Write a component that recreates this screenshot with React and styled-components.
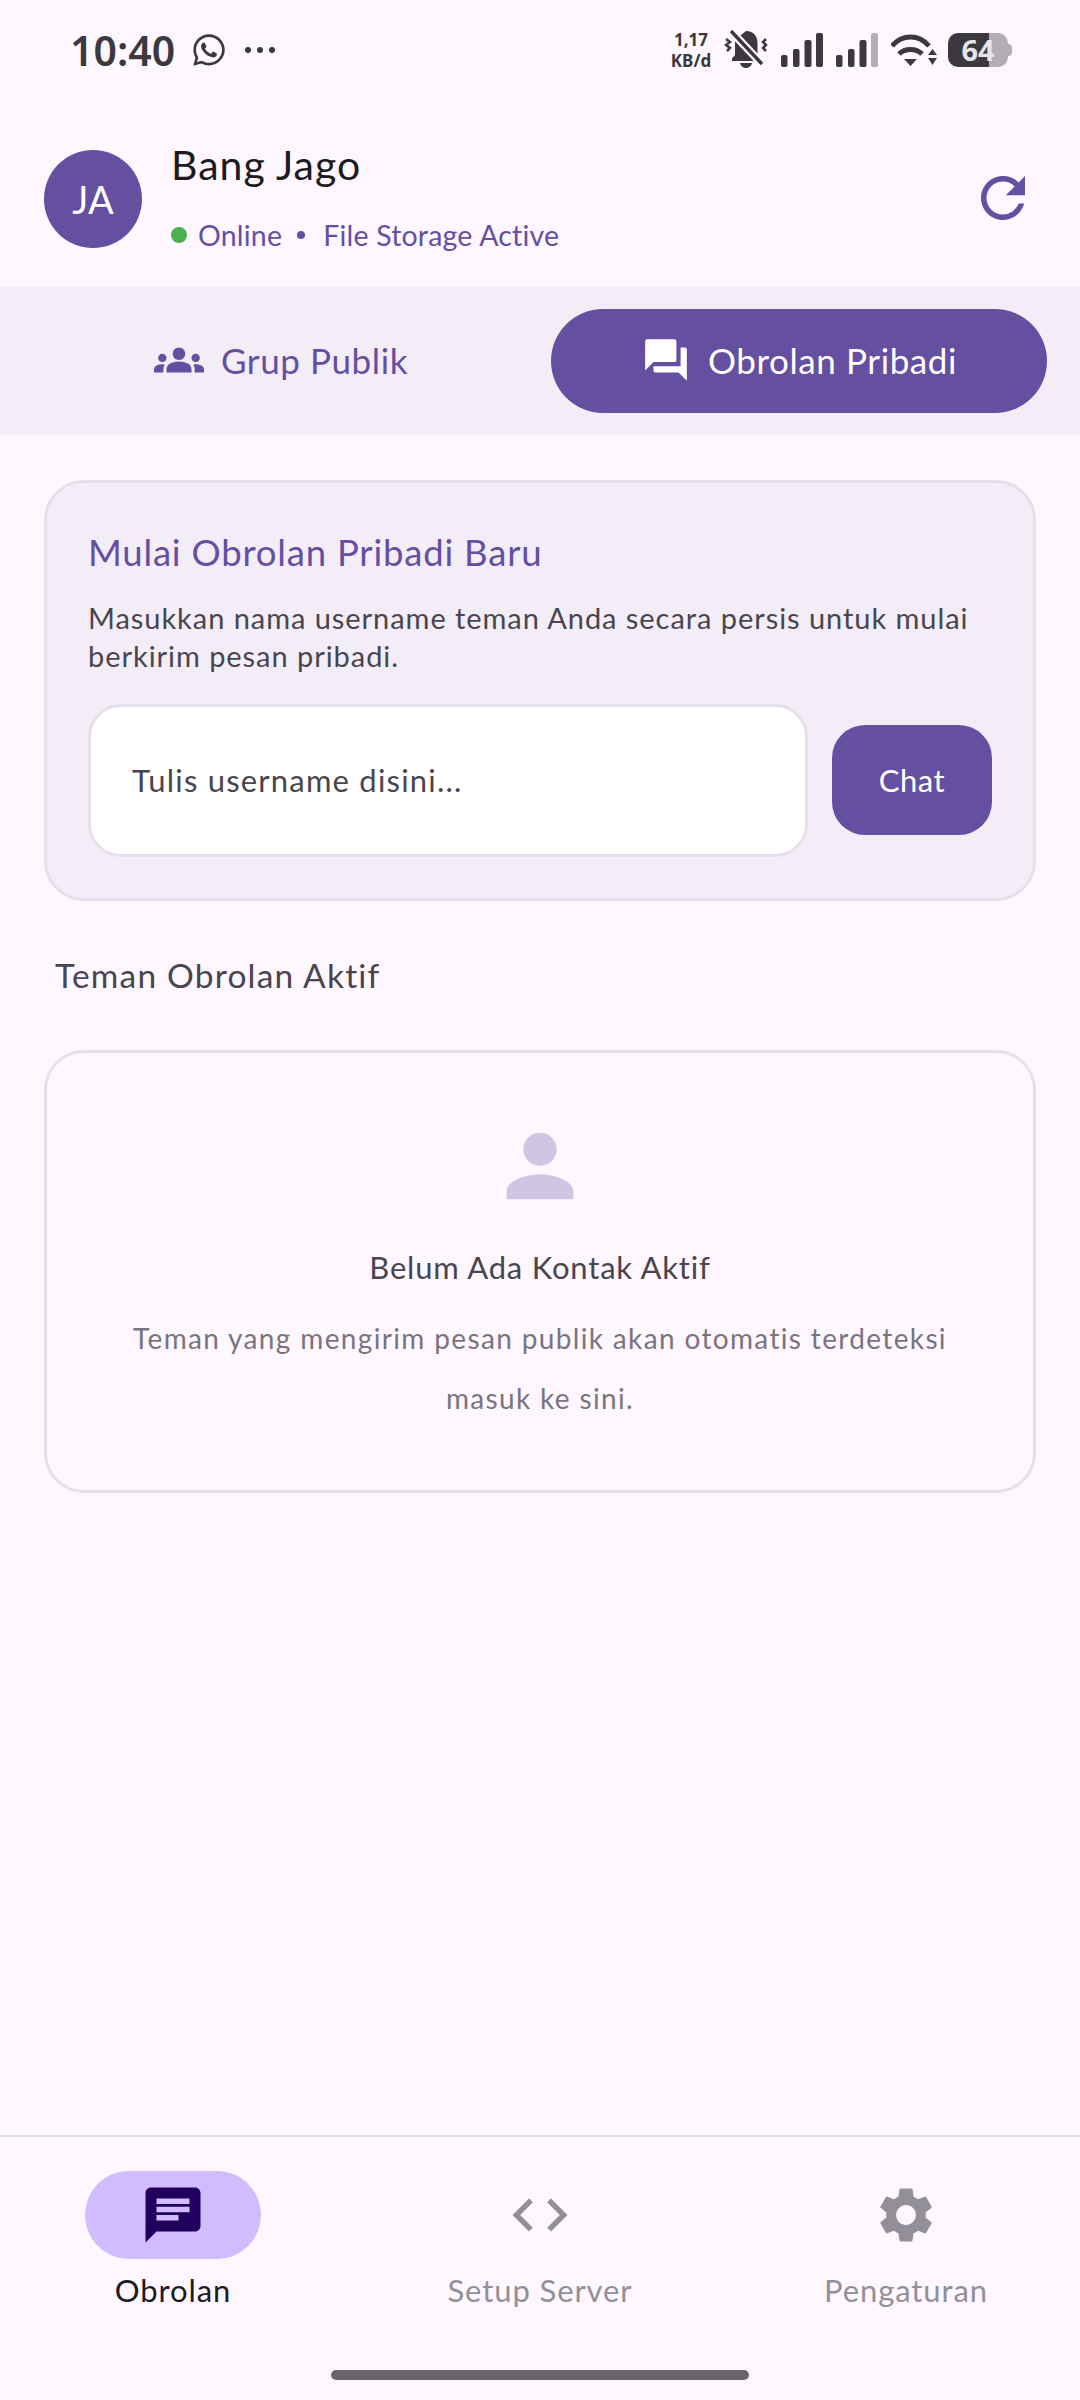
import React from 'react';
import styled, { createGlobalStyle } from 'styled-components';
import { FaWhatsapp } from 'react-icons/fa';
import { MdChat, MdCode, MdForum, MdGroups, MdPerson, MdRefresh, MdSettings } from 'react-icons/md';

const FONT = 'Lato, "Noto Sans", "Liberation Sans", sans-serif';

const GlobalStyle = createGlobalStyle`
  html, body {
    margin: 0;
    padding: 0;
    background: #fef7ff;
  }
  * { box-sizing: border-box; }
`;

const Screen = styled.div`
  width: 1080px;
  height: 2400px;
  display: flex;
  flex-direction: column;
  background: #fef7ff;
  font-family: ${FONT};
  overflow: hidden;
`;

/* status bar */
const StatusBar = styled.div`
  height: 100px;
  padding: 0 72px 0 70px;
  display: flex;
  align-items: center;
  justify-content: space-between;
  color: #3b383e;
  font-family: "Noto Sans", sans-serif;
`;

const StatusLeft = styled.div`
  display: flex;
  align-items: center;
`;

const Time = styled.span`
  font-size: 41px;
  font-weight: 600;
  line-height: 1;
`;

const WhatsappIcon = styled(FaWhatsapp)`
  margin-left: 16px;
`;

const Dots = styled.div`
  display: flex;
  gap: 6px;
  margin-left: 18px;
  span {
    width: 6px;
    height: 6px;
    border-radius: 50%;
    background: #3b383e;
  }
`;

const StatusRight = styled.div`
  display: flex;
  align-items: center;
  height: 40px;
  gap: 13px;
`;

const NetSpeed = styled.div`
  width: 46px;
  margin-right: -3px;
  text-align: center;
  font-size: 17px;
  font-weight: 700;
  line-height: 21px;
  letter-spacing: 0;
`;

const Battery = styled.div`
  position: relative;
  width: 60px;
  height: 34px;
  margin-left: -2px;
  border-radius: 10px;
  background: linear-gradient(90deg, #3b383e 68%, #b3aeb4 68%);
  color: #e8e5e9;
  font-size: 29px;
  font-weight: 700;
  line-height: 34px;
  text-align: center;
  &::after {
    content: '';
    position: absolute;
    right: -4px;
    top: 11px;
    width: 4px;
    height: 12px;
    border-radius: 0 4px 4px 0;
    background: #b3aeb4;
  }
`;

const BellOff = () => (
  <svg width="44" height="40" viewBox="0 0 44 40" fill="#3b383e">
    <path d="M22 1c4 0 7 1.500 9 4 2 2.500 2.500 6 2.500 9v11l3 3.500V31H8v-2.500l3-3.500V14c0-2 .3-3.500 1-5z" />
    <path d="M16 33h12c-.6 2.800-3 5-6 5s-5.400-2.200-6-5z" />
    <path d="M6 0l31 33" stroke="#fef7ff" strokeWidth="8" />
    <path d="M7 1l31 33" stroke="#3b383e" strokeWidth="3.500" fill="none" />
    <path d="M2 9l4 3-4 3 4 3-3 3M42 9l-3 3 3 3-3 3 3 3" stroke="#3b383e" strokeWidth="2.500" fill="none" />
  </svg>
);

const Signal = ({ dim }) => (
  <svg width="42" height="34" viewBox="0 0 42 34" fill="#3b383e">
    <rect x="0" y="22" width="6.500" height="12" rx="2" />
    <rect x="12" y="16" width="6.500" height="18" rx="2" />
    <rect x="23.500" y="7" width="7" height="27" rx="2" />
    <rect x="35" y="0" width="7" height="34" rx="2" fill={dim ? '#b3aeb4' : '#3b383e'} />
  </svg>
);

const Wifi = () => (
  <svg width="46" height="34" viewBox="0 0 46 34" fill="none" stroke="#3b383e">
    <path d="M1 13C11 1 28 1 38 13" strokeWidth="5" />
    <path d="M8 21c6-6 17-6 23 0" strokeWidth="5" />
    <path d="M13 26h13l-6.500 7z" fill="#3b383e" stroke="none" />
    <path d="M37 22h9l-4.500-6zM37 25h9l-4.500 7z" fill="#3b383e" stroke="none" />
  </svg>
);

/* header */
const Header = styled.header`
  height: 187px;
  padding: 0 44px;
  display: flex;
  align-items: center;
`;

const Avatar = styled.div`
  width: 98px;
  height: 98px;
  flex: none;
  margin-top: 10px;
  border-radius: 50%;
  background: #654fa0;
  color: #fff;
  font-size: 38px;
  display: flex;
  align-items: center;
  justify-content: center;
`;

const Identity = styled.div`
  flex: 1;
  margin: 6px 0 0 29px;
  display: flex;
  flex-direction: column;
  gap: 27px;
`;

const UserName = styled.div`
  font-size: 41px;
  line-height: 50px;
  letter-spacing: 1px;
  color: #1d1b20;
`;

const StatusLine = styled.div`
  display: flex;
  align-items: center;
  font-size: 28.500px;
  line-height: 36px;
  letter-spacing: 0.2px;
  color: #654fa0;
`;

const OnlineDot = styled.span`
  width: 16px;
  height: 16px;
  border-radius: 50%;
  background: #4caf50;
  margin-right: 11px;
`;

const Bullet = styled.span`
  width: 8px;
  height: 8px;
  border-radius: 50%;
  background: #654fa0;
  margin: 0 18px 0 15px;
`;

const RefreshIcon = styled(MdRefresh)`
  color: #654fa0;
  margin-top: 9px;
`;

/* tabs */
const TabBar = styled.div`
  height: 148px;
  padding: 22px 33px 22px 33px;
  background: #f3edf7;
  display: grid;
  grid-template-columns: 1fr 1fr;
  gap: 22px;
`;

const Tab = styled.div`
  border-radius: 52px;
  padding-bottom: 2px;
  display: flex;
  align-items: center;
  justify-content: center;
  gap: 17px;
  font-size: 35px;
  letter-spacing: 0.6px;
  background: ${(p) => (p.$active ? '#654fa0' : 'transparent')};
  color: ${(p) => (p.$active ? '#fff' : '#654fa0')};
`;

/* body */
const Content = styled.main`
  flex: 1;
  padding: 45px 44px 0;
  display: flex;
  flex-direction: column;
`;

const NewChatCard = styled.section`
  height: 421px;
  padding: 46px 41px 0;
  border: 3px solid #e7e0ec;
  border-radius: 40px;
  background: #f3edf7;
`;

const CardTitle = styled.h2`
  margin: 0;
  font-size: 36.500px;
  font-weight: 400;
  line-height: 46px;
  letter-spacing: 0.8px;
  color: #654fa0;
`;

const CardText = styled.p`
  margin: 23.500px 0 0;
  font-size: 29px;
  line-height: 38px;
  letter-spacing: 0.95px;
  color: #49454f;
`;

const InputRow = styled.div`
  margin-top: 29px;
  display: flex;
  align-items: center;
  gap: 24px;
`;

const UsernameField = styled.div`
  flex: 1;
  height: 153px;
  padding: 0 41px;
  border: 3px solid #e7e0ec;
  border-radius: 33px;
  background: #fff;
  display: flex;
  align-items: center;
  font-size: 31px;
  letter-spacing: 1.2px;
  color: #49454f;
`;

const ChatButton = styled.div`
  width: 160px;
  height: 110px;
  border-radius: 33px;
  background: #654fa0;
  color: #fff;
  display: flex;
  align-items: center;
  justify-content: center;
  font-size: 31px;
  letter-spacing: 0.5px;
`;

const SectionTitle = styled.h3`
  margin: 52px 0 0 11px;
  font-size: 33.500px;
  font-weight: 400;
  line-height: 44px;
  letter-spacing: 1.2px;
  color: #49454f;
`;

const EmptyCard = styled.section`
  margin-top: 53px;
  height: 443px;
  border: 3px solid #e7e0ec;
  border-radius: 40px;
  display: flex;
  flex-direction: column;
  align-items: center;
  padding: 63px 80px 0;
  text-align: center;
`;

const EmptyIcon = styled(MdPerson)`
  color: #cfc6e4;
  flex: none;
`;

const EmptyTitle = styled.div`
  margin-top: 30px;
  font-size: 31px;
  line-height: 42px;
  letter-spacing: 0.8px;
  color: #49454f;
`;

const EmptyText = styled.p`
  margin: 20px 0 0;
  font-size: 28px;
  line-height: 60px;
  letter-spacing: 1.35px;
  color: #79747e;
`;

/* bottom navigation */
const BottomNav = styled.nav`
  height: 265px;
  border-top: 2px solid #e7e0ec;
  padding-top: 34px;
  display: flex;
  flex-direction: column;
  align-items: center;
`;

const NavRow = styled.div`
  width: 100%;
  padding-left: 85px;
  display: grid;
  grid-template-columns: 176px 558px 174px;
`;

const NavItem = styled.div`
  display: flex;
  flex-direction: column;
  align-items: center;
  color: ${(p) => (p.$active ? '#1d1b20' : '#938f99')};
  font-size: 31px;
  line-height: 40px;
  letter-spacing: 0.9px;
`;

const NavIconWrap = styled.div`
  width: 176px;
  height: 88px;
  margin-bottom: 11px;
  border-radius: 44px;
  display: flex;
  align-items: center;
  justify-content: center;
  background: ${(p) => (p.$active ? '#d0bcff' : 'transparent')};
  color: ${(p) => (p.$active ? '#21005d' : '#938f99')};
`;

const HomeBar = styled.div`
  width: 418px;
  height: 10px;
  margin-top: 60px;
  border-radius: 5px;
  background: #69666b;
`;

const navItems = [
  { label: 'Obrolan', Icon: MdChat, active: true },
  { label: 'Setup Server', Icon: MdCode },
  { label: 'Pengaturan', Icon: MdSettings },
];

export default function App() {
  return (
    <>
      <GlobalStyle />
      <Screen>
        <StatusBar>
          <StatusLeft>
            <Time>10:40</Time>
            <WhatsappIcon size={36} />
            <Dots><span /><span /><span /></Dots>
          </StatusLeft>
          <StatusRight>
            <NetSpeed>1,17<br />KB/d</NetSpeed>
            <BellOff />
            <Signal />
            <Signal dim />
            <Wifi />
            <Battery>64</Battery>
          </StatusRight>
        </StatusBar>

        <Header>
          <Avatar>JA</Avatar>
          <Identity>
            <UserName>Bang Jago</UserName>
            <StatusLine>
              <OnlineDot />
              Online
              <Bullet />
              File Storage Active
            </StatusLine>
          </Identity>
          <RefreshIcon size={66} />
        </Header>

        <TabBar>
          <Tab>
            <MdGroups size={50} />
            Grup Publik
          </Tab>
          <Tab $active>
            <MdForum size={50} />
            Obrolan Pribadi
          </Tab>
        </TabBar>

        <Content>
          <NewChatCard>
            <CardTitle>Mulai Obrolan Pribadi Baru</CardTitle>
            <CardText>
              Masukkan nama username teman Anda secara persis untuk mulai berkirim pesan pribadi.
            </CardText>
            <InputRow>
              <UsernameField>Tulis username disini...</UsernameField>
              <ChatButton>Chat</ChatButton>
            </InputRow>
          </NewChatCard>

          <SectionTitle>Teman Obrolan Aktif</SectionTitle>

          <EmptyCard>
            <EmptyIcon size={100} />
            <EmptyTitle>Belum Ada Kontak Aktif</EmptyTitle>
            <EmptyText>
              Teman yang mengirim pesan publik akan otomatis terdeteksi masuk ke sini.
            </EmptyText>
          </EmptyCard>
        </Content>

        <BottomNav>
          <NavRow>
            {navItems.map(({ label, Icon, active }) => (
              <NavItem key={label} $active={active}>
                <NavIconWrap $active={active}>
                  <Icon size={66} />
                </NavIconWrap>
                {label}
              </NavItem>
            ))}
          </NavRow>
          <HomeBar />
        </BottomNav>
      </Screen>
    </>
  );
}
